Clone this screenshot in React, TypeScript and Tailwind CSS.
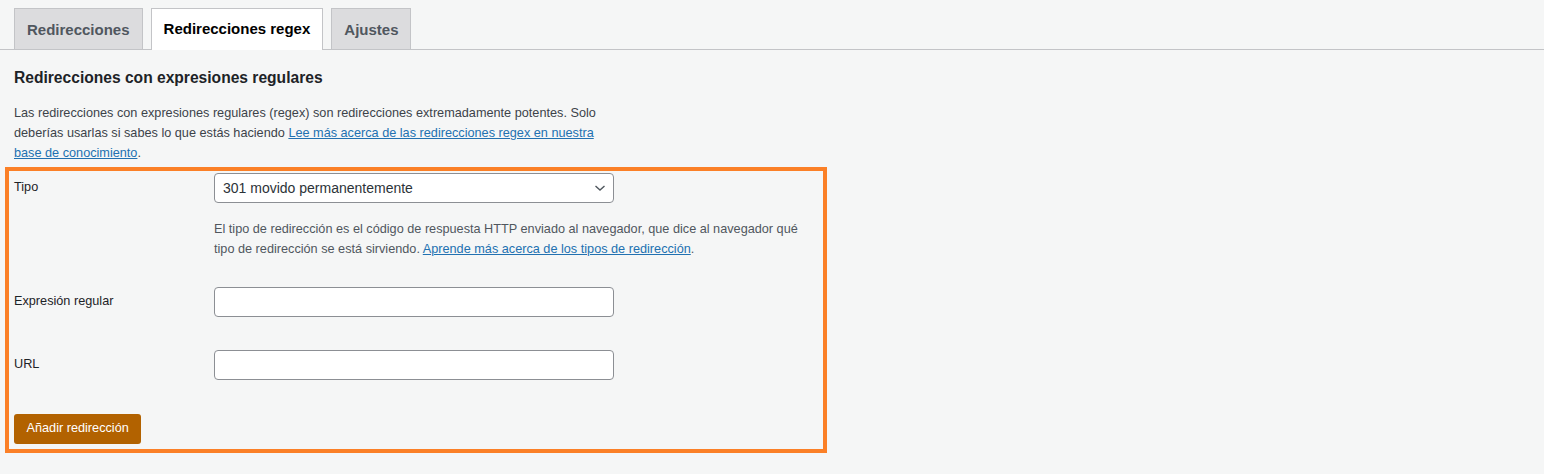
import React, { useState } from "react";

const tabs = ["Redirecciones", "Redirecciones regex", "Ajustes"];

export default function App() {
  const [active, setActive] = useState(1);
  const [tipo, setTipo] = useState("301");

  return (
    <div className="min-h-[474px] bg-[#f5f6f6] text-[12.7px] text-[#3c434a] font-['Liberation_Sans',Arial,sans-serif]">
      {/* Tabs */}
      <div className="flex items-end gap-2 border-b border-[#c3c4c7] pl-[14px] pt-2">
        {tabs.map((t, i) => (
          <button
            key={t}
            onClick={() => setActive(i)}
            className={
              i === active
                ? "-mb-px h-[42px] border border-b-0 border-[#c3c4c7] bg-white px-[12px] pt-[2px] pb-[3px] text-[15px] font-semibold text-[#000]"
                : "h-[41px] border border-b-0 border-[#c3c4c7] bg-[#dcdcde] px-[12px] pt-[2px] text-[15px] font-semibold text-[#50575e]"
            }
          >
            {t}
          </button>
        ))}
      </div>

      <div className="px-[14px] pt-[18px]">
        <h2 className="text-[15.6px] font-semibold leading-5 text-[#1d2327]">
          Redirecciones con expresiones regulares
        </h2>
        <p className="mt-[15px] max-w-[600px] leading-5">
          Las redirecciones con expresiones regulares (regex) son redirecciones extremadamente potentes. Solo
          deberías usarlas si sabes lo que estás haciendo{" "}
          <a href="#" className="text-[#2271b1] underline">
            Lee más acerca de las redirecciones regex en nuestra base de conocimiento
          </a>
          .
        </p>
      </div>

      {/* Form */}
      <div className="ml-[5px] mt-[4px] w-[822px] border-4 border-[#fb8027] px-[5px] pb-[5px] pt-[2px]">
        <div className="flex">
          <div className="w-[200px] shrink-0 pt-[5px] text-[#1d2327]">Tipo</div>
          <div className="flex-1 pr-2">
            <div className="relative w-[400px]">
              <select
                value={tipo}
                onChange={(e) => setTipo(e.target.value)}
                className="h-[30px] w-full appearance-none rounded border border-[#8c8f94] bg-white pl-2 pr-6 text-[14px] text-[#2c3338]"
              >
                <option value="301">301 movido permanentemente</option>
                <option value="302">302 encontrado</option>
                <option value="307">307 redirección temporal</option>
                <option value="410">410 contenido eliminado</option>
              </select>
              <svg
                className="pointer-events-none absolute right-[8px] top-[10px]"
                width="12"
                height="10"
                viewBox="0 0 12 10"
                fill="none"
                stroke="#50575e"
                strokeWidth="1.4"
              >
                <path d="M1.5 3l4.5 4 4.5-4" />
              </svg>
            </div>
            <p className="mt-[16px] leading-5 text-[#50575e]">
              El tipo de redirección es el código de respuesta HTTP enviado al navegador, que dice al navegador qué
              tipo de redirección se está sirviendo.{" "}
              <a href="#" className="text-[#2271b1] underline">
                Aprende más acerca de los tipos de redirección
              </a>
              .
            </p>
          </div>
        </div>

        <div className="mt-[28px] flex items-center">
          <label className="w-[200px] shrink-0 text-[#1d2327]">Expresión regular</label>
          <input className="h-[30px] w-[400px] rounded border border-[#8c8f94] bg-white px-2 text-[14px]" />
        </div>

        <div className="mt-[33px] flex items-center">
          <label className="w-[200px] shrink-0 text-[#1d2327]">URL</label>
          <input className="h-[30px] w-[400px] rounded border border-[#8c8f94] bg-white px-2 text-[14px]" />
        </div>

        <button className="mt-[34px] h-[30px] rounded-[3px] bg-[#b26200] px-[12.5px] text-[12.7px] text-white">
          Añadir redirección
        </button>
      </div>
    </div>
  );
}
